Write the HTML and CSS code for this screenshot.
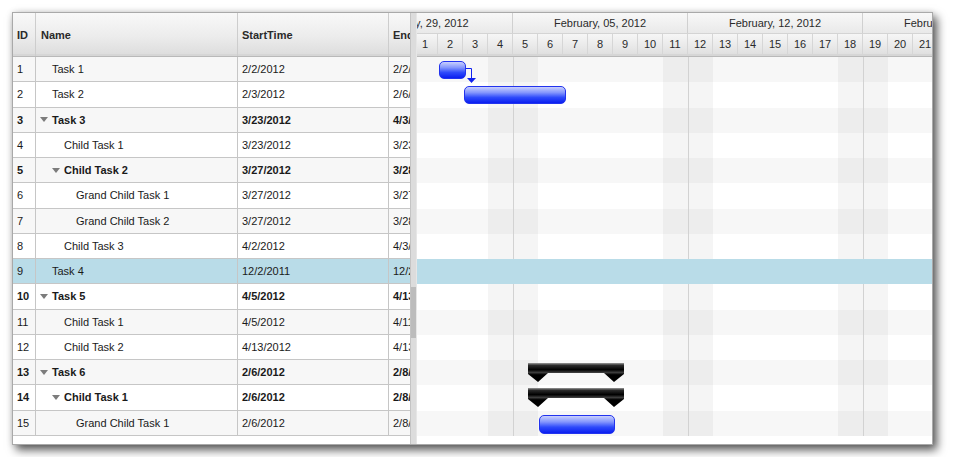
FILE: index.html
```html
<!DOCTYPE html>
<html lang="en">
<head>
    <meta charset="UTF-8">
    <title>Gantt Chart</title>
    <link rel="stylesheet" href="styles.css">
</head>
<body>

    <div class="gantt">

        <!-- Task grid -->
        <div class="grid">
            <div class="grid-head">
                <div class="cell">ID</div>
                <div class="cell name-head">Name</div>
                <div class="cell">StartTime</div>
                <div class="cell">EndTime</div>
            </div>
            <div class="grid-body">
                <div class="grid-row">
                    <div class="cell">1</div>
                    <div class="cell name"><span class="toggle"></span>Task 1</div>
                    <div class="cell">2/2/2012</div>
                    <div class="cell">2/2/2012</div>
                </div>
                <div class="grid-row">
                    <div class="cell">2</div>
                    <div class="cell name"><span class="toggle"></span>Task 2</div>
                    <div class="cell">2/3/2012</div>
                    <div class="cell">2/6/2012</div>
                </div>
                <div class="grid-row parent">
                    <div class="cell">3</div>
                    <div class="cell name"><span class="toggle open"></span>Task 3</div>
                    <div class="cell">3/23/2012</div>
                    <div class="cell">4/3/2012</div>
                </div>
                <div class="grid-row">
                    <div class="cell">4</div>
                    <div class="cell name lvl1"><span class="toggle"></span>Child Task 1</div>
                    <div class="cell">3/23/2012</div>
                    <div class="cell">3/23/2012</div>
                </div>
                <div class="grid-row parent">
                    <div class="cell">5</div>
                    <div class="cell name lvl1"><span class="toggle open"></span>Child Task 2</div>
                    <div class="cell">3/27/2012</div>
                    <div class="cell">3/28/2012</div>
                </div>
                <div class="grid-row">
                    <div class="cell">6</div>
                    <div class="cell name lvl2"><span class="toggle"></span>Grand Child Task 1</div>
                    <div class="cell">3/27/2012</div>
                    <div class="cell">3/27/2012</div>
                </div>
                <div class="grid-row">
                    <div class="cell">7</div>
                    <div class="cell name lvl2"><span class="toggle"></span>Grand Child Task 2</div>
                    <div class="cell">3/27/2012</div>
                    <div class="cell">3/28/2012</div>
                </div>
                <div class="grid-row">
                    <div class="cell">8</div>
                    <div class="cell name lvl1"><span class="toggle"></span>Child Task 3</div>
                    <div class="cell">4/2/2012</div>
                    <div class="cell">4/3/2012</div>
                </div>
                <div class="grid-row selected">
                    <div class="cell">9</div>
                    <div class="cell name"><span class="toggle"></span>Task 4</div>
                    <div class="cell">12/2/2011</div>
                    <div class="cell">12/2/2011</div>
                </div>
                <div class="grid-row parent">
                    <div class="cell">10</div>
                    <div class="cell name"><span class="toggle open"></span>Task 5</div>
                    <div class="cell">4/5/2012</div>
                    <div class="cell">4/13/2012</div>
                </div>
                <div class="grid-row">
                    <div class="cell">11</div>
                    <div class="cell name lvl1"><span class="toggle"></span>Child Task 1</div>
                    <div class="cell">4/5/2012</div>
                    <div class="cell">4/11/2012</div>
                </div>
                <div class="grid-row">
                    <div class="cell">12</div>
                    <div class="cell name lvl1"><span class="toggle"></span>Child Task 2</div>
                    <div class="cell">4/13/2012</div>
                    <div class="cell">4/13/2012</div>
                </div>
                <div class="grid-row parent">
                    <div class="cell">13</div>
                    <div class="cell name"><span class="toggle open"></span>Task 6</div>
                    <div class="cell">2/6/2012</div>
                    <div class="cell">2/8/2012</div>
                </div>
                <div class="grid-row parent">
                    <div class="cell">14</div>
                    <div class="cell name lvl1"><span class="toggle open"></span>Child Task 1</div>
                    <div class="cell">2/6/2012</div>
                    <div class="cell">2/8/2012</div>
                </div>
                <div class="grid-row">
                    <div class="cell">15</div>
                    <div class="cell name lvl2"><span class="toggle"></span>Grand Child Task 1</div>
                    <div class="cell">2/6/2012</div>
                    <div class="cell">2/8/2012</div>
                </div>
            </div>
        </div>

        <!-- Grid scrollbar / splitter -->
        <div class="vscroll">
            <div class="thumb"></div>
        </div>

        <!-- Timeline -->
        <div class="chart">
            <div class="timeline">
                <div class="weeks">
                    <div class="week">January, 29, 2012</div>
                    <div class="week">February, 05, 2012</div>
                    <div class="week">February, 12, 2012</div>
                    <div class="week">February, 19, 2012</div>
                </div>
                <div class="days">
                    <div class="day">29</div><div class="day">30</div><div class="day">31</div>
                    <div class="day">1</div><div class="day">2</div><div class="day">3</div><div class="day">4</div>
                    <div class="day">5</div><div class="day">6</div><div class="day">7</div><div class="day">8</div>
                    <div class="day">9</div><div class="day">10</div><div class="day">11</div>
                    <div class="day">12</div><div class="day">13</div><div class="day">14</div><div class="day">15</div>
                    <div class="day">16</div><div class="day">17</div><div class="day">18</div>
                    <div class="day">19</div><div class="day">20</div><div class="day">21</div><div class="day">22</div>
                    <div class="day">23</div><div class="day">24</div><div class="day">25</div>
                </div>

                <div class="chart-body">
                    <div class="chart-row">
                        <div class="bar" style="left: 101px; width: 27px;"></div>
                        <svg class="link" width="14" height="20" viewBox="0 0 14 20">
                            <polyline points="2,3.5 7.5,3.5 7.5,13" fill="none" stroke="#1122ee" stroke-width="1"/>
                            <polygon points="3,13 12,13 7.5,18" fill="#1122ee"/>
                        </svg>
                    </div>
                    <div class="chart-row">
                        <div class="bar" style="left: 126px; width: 102px;"></div>
                    </div>
                    <div class="chart-row"></div>
                    <div class="chart-row"></div>
                    <div class="chart-row"></div>
                    <div class="chart-row"></div>
                    <div class="chart-row"></div>
                    <div class="chart-row"></div>
                    <div class="chart-row selected"></div>
                    <div class="chart-row"></div>
                    <div class="chart-row"></div>
                    <div class="chart-row"></div>
                    <div class="chart-row">
                        <svg class="summary" style="left: 190px;" width="96" height="19" viewBox="0 0 96 19">
                            <defs>
                                <linearGradient id="summaryFill" x1="0" y1="0" x2="0" y2="19" gradientUnits="userSpaceOnUse">
                                    <stop offset="0" stop-color="#9a9a9a"/>
                                    <stop offset="0.12" stop-color="#2a2a2a"/>
                                    <stop offset="0.35" stop-color="#000"/>
                                    <stop offset="0.5" stop-color="#3c3c3c"/>
                                    <stop offset="0.62" stop-color="#000"/>
                                    <stop offset="1" stop-color="#000"/>
                                </linearGradient>
                            </defs>
                            <path d="M0,0 H96 V11 L86,19 L76,10 H20 L10,19 L0,11 Z" fill="url(#summaryFill)"/>
                        </svg>
                    </div>
                    <div class="chart-row">
                        <svg class="summary" style="left: 190px;" width="96" height="19" viewBox="0 0 96 19">
                            <path d="M0,0 H96 V11 L86,19 L76,10 H20 L10,19 L0,11 Z" fill="url(#summaryFill)"/>
                        </svg>
                    </div>
                    <div class="chart-row">
                        <div class="bar tall" style="left: 201px; width: 76px;"></div>
                    </div>

                    <!-- day columns: weekends shaded, a line at each week start -->
                    <div class="day-cols">
                        <div class="col weekend"></div><div class="col"></div><div class="col"></div>
                        <div class="col"></div><div class="col"></div><div class="col"></div><div class="col weekend"></div>
                        <div class="col weekend week-start"></div><div class="col"></div><div class="col"></div><div class="col"></div>
                        <div class="col"></div><div class="col"></div><div class="col weekend"></div>
                        <div class="col weekend week-start"></div><div class="col"></div><div class="col"></div><div class="col"></div>
                        <div class="col"></div><div class="col"></div><div class="col weekend"></div>
                        <div class="col weekend week-start"></div><div class="col"></div><div class="col"></div><div class="col"></div>
                        <div class="col"></div><div class="col"></div><div class="col weekend"></div>
                    </div>
                </div>
            </div>
        </div>

    </div>

</body>
</html>
```

FILE: styles.css
```css
body {
    margin: 0;
    padding: 12px;
    background: #fff;
    font-family: "Liberation Sans", Arial, sans-serif;
    font-size: 11px;
    color: #1a1a1a;
}

.gantt {
    display: flex;
    width: 921px;
    height: 433px;
    box-sizing: border-box;
    border: 1px solid #a9a9a9;
    background: #fff;
    overflow: hidden;
    box-shadow: 4px 5px 9px rgba(0, 0, 0, 0.65), 0 0 6px rgba(0, 0, 0, 0.12);
}

/* Task grid */
.grid {
    width: 397px;
    flex: none;
    overflow: hidden;
}

.grid-head,
.grid-row {
    display: grid;
    grid-template-columns: 23px 202px 151px 80px;
}

.grid-head {
    height: 44px;
    box-sizing: border-box;
    border-bottom: 1px solid #b9b9b9;
    box-shadow: inset 0 -2px 0 #d6d6d6;
    background: linear-gradient(#f8f8f8, #ececec 55%, #dcdcdc);
    font-weight: bold;
    color: #2a2a2a;
}

.cell {
    display: flex;
    align-items: center;
    box-sizing: border-box;
    padding-left: 4px;
    border-right: 1px solid #c6c6c6;
    white-space: nowrap;
    overflow: hidden;
}

.grid-head .cell {
    border-right-color: #cdcdcd;
}

.grid-head .name-head {
    padding-left: 5px;
}

.grid-row {
    height: 25.25px;
}

.grid-row .cell {
    border-bottom: 1px solid #c6c6c6;
}

.grid-row:nth-child(odd) {
    background: #f7f7f7;
}

.grid-row.parent {
    font-weight: bold;
}

.grid-row.selected {
    background: #b9dce8;
}

.name.lvl1 {
    padding-left: 16px;
}

.name.lvl2 {
    padding-left: 28px;
}

.toggle {
    width: 12px;
    flex: none;
    display: flex;
    align-items: center;
}

.toggle.open::before {
    content: "";
    border-left: 4px solid transparent;
    border-right: 4px solid transparent;
    border-top: 5px solid #7c7c7c;
}

/* Splitter with the grid's scrollbar */
.vscroll {
    width: 7px;
    flex: none;
    box-sizing: border-box;
    background: #dcdcdc;
    border-left: 1px solid #c4c4c4;
    border-right: 1px solid #e6e6e6;
}

.thumb {
    margin-top: 274px;
    height: 51px;
    background: #bcbcbc;
}

/* Timeline */
.chart {
    flex: 1;
    overflow: hidden;
}

.timeline {
    width: 700px;
    margin-left: -79px;
}

.weeks,
.days {
    display: flex;
    color: #2a2a2a;
}

.weeks {
    height: 21px;
    box-sizing: border-box;
    border-bottom: 1px solid #d4d4d4;
    background: linear-gradient(#f8f8f8, #e9e9e9);
}

.week {
    width: 175px;
    flex: none;
    box-sizing: border-box;
    border-right: 1px solid #d0d0d0;
    text-align: center;
    line-height: 20px;
}

.days {
    height: 23px;
    box-sizing: border-box;
    border-bottom: 1px solid #b9b9b9;
    box-shadow: inset 0 -2px 0 #d6d6d6;
    background: linear-gradient(#f6f6f6, #e8e8e8 60%, #dddddd);
}

.day {
    width: 25px;
    flex: none;
    box-sizing: border-box;
    border-right: 1px solid #d6d6d6;
    text-align: center;
    line-height: 21px;
}

.chart-body {
    position: relative;
}

.chart-row {
    position: relative;
    height: 25.25px;
}

.chart-row:nth-child(odd) {
    background: #f7f7f7;
}

.chart-row.selected {
    z-index: 2;
    background: #b9dce8;
}

.day-cols {
    position: absolute;
    top: 0;
    left: 0;
    right: 0;
    bottom: 0;
    display: flex;
    z-index: 1;
}

.col {
    width: 25px;
    flex: none;
    box-sizing: border-box;
}

.col.weekend {
    background: rgba(0, 0, 0, 0.038);
}

.col.week-start {
    border-left: 1px solid #d2d2d2;
}

/* Task bars */
.bar {
    position: absolute;
    z-index: 3;
    top: 4px;
    height: 18px;
    box-sizing: border-box;
    border: 1px solid #2233ee;
    border-radius: 5px;
    background: linear-gradient(#c9d0fd, #8496fd 35%, #2f4bfb 65%, #0a1ef0);
}

.bar.tall {
    top: 4.5px;
    height: 19px;
}

.link {
    position: absolute;
    z-index: 3;
    left: 126px;
    top: 8px;
}

.summary {
    position: absolute;
    z-index: 3;
    top: 3px;
}
```
